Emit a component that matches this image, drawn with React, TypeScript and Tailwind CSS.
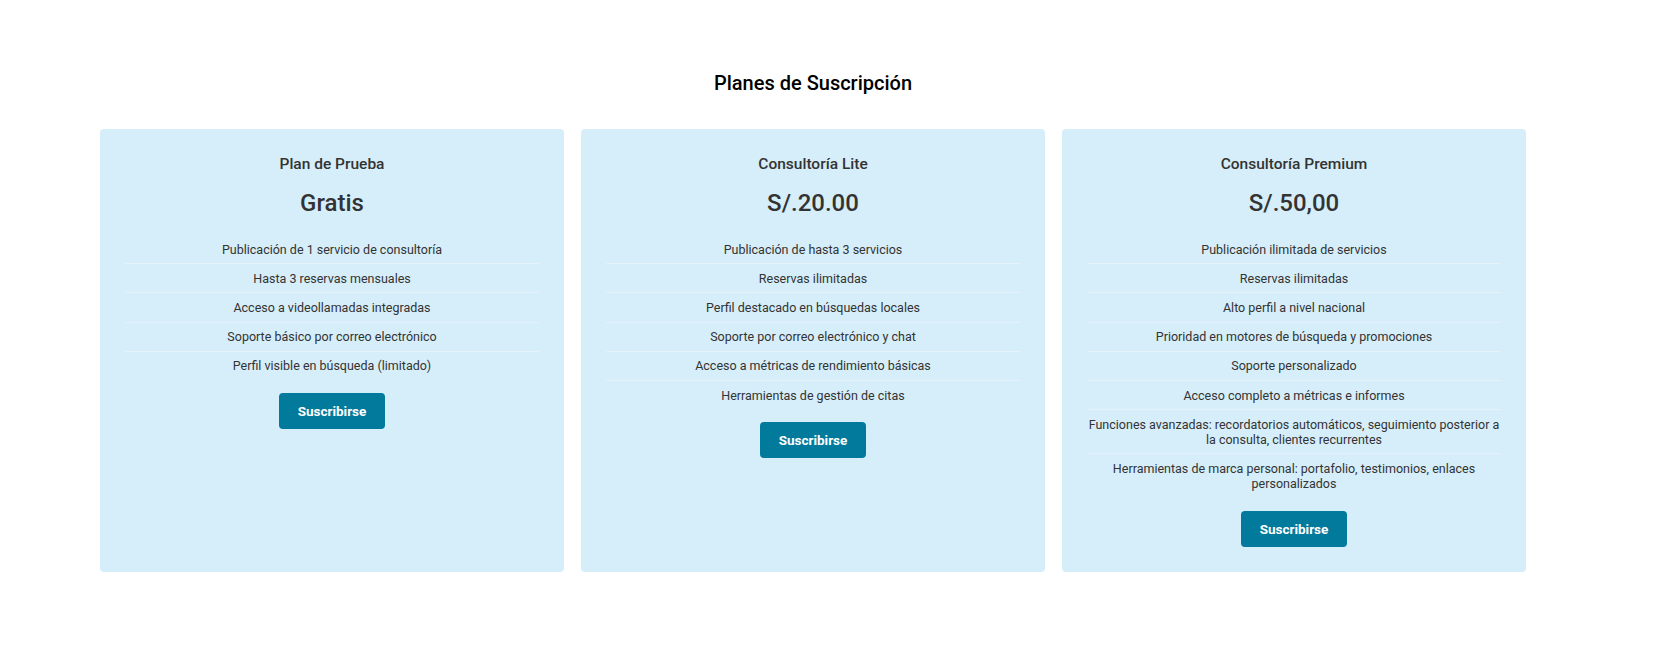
import React from "react";

type Plan = {
  name: string;
  price: string;
  features: string[];
};

const plans: Plan[] = [
  {
    name: "Plan de Prueba",
    price: "Gratis",
    features: [
      "Publicación de 1 servicio de consultoría",
      "Hasta 3 reservas mensuales",
      "Acceso a videollamadas integradas",
      "Soporte básico por correo electrónico",
      "Perfil visible en búsqueda (limitado)",
    ],
  },
  {
    name: "Consultoría Lite",
    price: "S/.20.00",
    features: [
      "Publicación de hasta 3 servicios",
      "Reservas ilimitadas",
      "Perfil destacado en búsquedas locales",
      "Soporte por correo electrónico y chat",
      "Acceso a métricas de rendimiento básicas",
      "Herramientas de gestión de citas",
    ],
  },
  {
    name: "Consultoría Premium",
    price: "S/.50,00",
    features: [
      "Publicación ilimitada de servicios",
      "Reservas ilimitadas",
      "Alto perfil a nivel nacional",
      "Prioridad en motores de búsqueda y promociones",
      "Soporte personalizado",
      "Acceso completo a métricas e informes",
      "Funciones avanzadas: recordatorios automáticos, seguimiento posterior a la consulta, clientes recurrentes",
      "Herramientas de marca personal: portafolio, testimonios, enlaces personalizados",
    ],
  },
];

const PlanCard = ({ plan }: { plan: Plan }) => {
  return (
    <div className="flex flex-col items-center rounded bg-[#d6eefa] p-[25px] text-[#333]">
      <h3 className="text-[15.5px] leading-5 font-medium">{plan.name}</h3>
      <p className="mt-[13px] text-2xl leading-8 font-medium">{plan.price}</p>

      {/* feature list */}
      <ul className="mt-4 w-full">
        {plan.features.map((feature, key) => (
          <li
            key={key}
            className="border-b border-[#e6f2f9] py-[6.6px] text-center text-[12.5px] leading-[15px] last:border-b-0"
          >
            {feature}
          </li>
        ))}
      </ul>

      <button className="mt-[13px] rounded bg-[#027a9c] px-[19px] py-2 text-[13.5px] leading-5 font-bold text-white">
        Suscribirse
      </button>
    </div>
  );
};

export default function App() {
  return (
    <div
      className="min-h-screen bg-white pl-[100px] pt-[69px]"
      style={{ fontFamily: "Roboto, 'Liberation Sans', sans-serif" }}
    >
      <div className="w-[1426px]">
        <h2 className="text-center text-xl leading-7 font-medium text-black">
          Planes de Suscripción
        </h2>
        <div className="mt-8 grid grid-cols-3 gap-[17px]">
          {plans.map((plan) => (
            <PlanCard key={plan.name} plan={plan} />
          ))}
        </div>
      </div>
    </div>
  );
}
